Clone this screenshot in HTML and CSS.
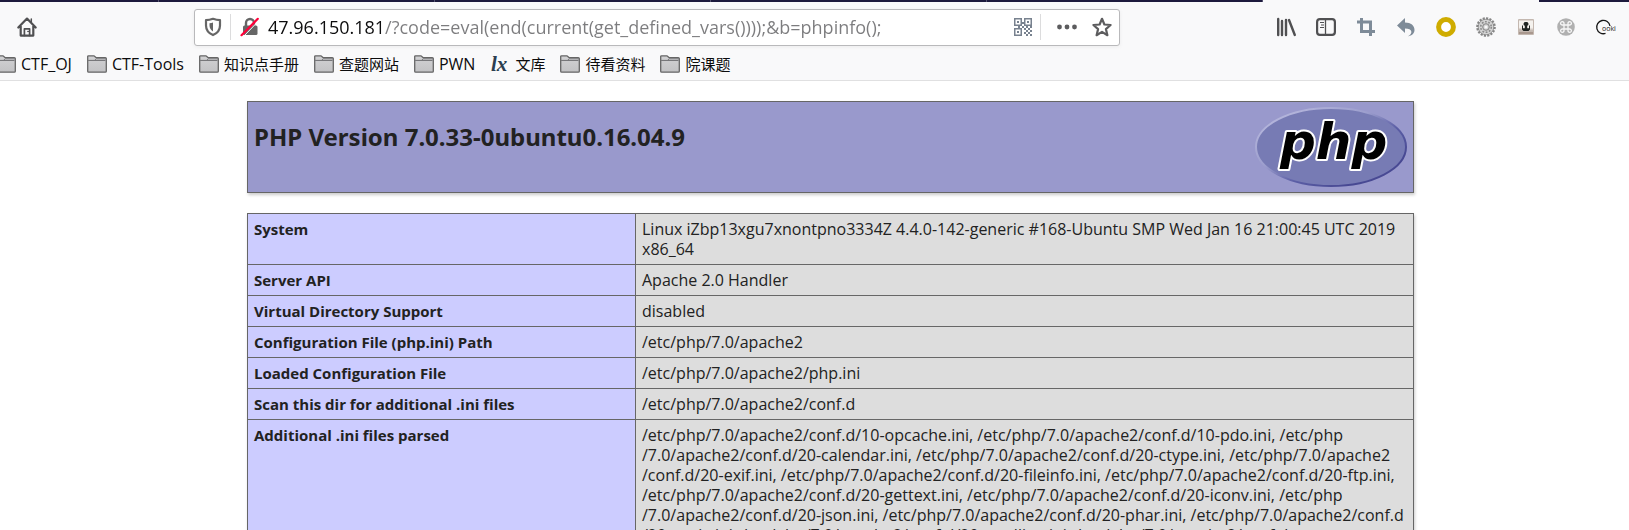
FILE: index.html
```html
<!DOCTYPE html>
<html lang="zh-CN">
<head>
<meta charset="utf-8">
<title>phpinfo()</title>
<link rel="stylesheet" href="styles.css">
</head>
<body>
<svg class="defs" width="0" height="0" aria-hidden="true">
  <defs>
    <linearGradient id="folder-fill" x1="0" y1="0" x2="0" y2="1"><stop offset="0" stop-color="#d2d2d4"/><stop offset="1" stop-color="#c2c2c4"/></linearGradient>
    <symbol id="folder" viewBox="0 0 20 18">
      <path d="M.7 16.2V1.6Q.7.8 1.5.8H7l2 1.8h9.3q1 0 1 1v12.6q0 1-1 1H1.7q-1 0-1-1Z" fill="url(#folder-fill)" stroke="#666" stroke-width="1.3"/>
      <path d="M1 5.400h6.500l1.600-1.600H19" fill="none" stroke="#77777a" stroke-width="1"/>
      <path d="M1.500 5.500H18.500" fill="none" stroke="#77777a" stroke-width="1"/>
    </symbol>
  </defs>
</svg>

<header class="browser">
  <div class="tabstrip"><span class="tab"></span><span class="tab"></span><span class="tab"></span><span class="tab"></span><span class="tab"></span><span class="tab tab-active"></span><span class="tab tab-rest"></span></div>
  <nav class="toolbar" aria-label="Navigation">
    <button class="tool" aria-label="Home"><svg width="20" height="20" viewBox="0 0 20 20" fill="none" stroke="#505052" stroke-width="2.200" stroke-linejoin="round" stroke-linecap="round"><path d="M1.300 10.500 10 1.600l8.700 8.900M3.700 9v9.600h12.600V9"/><path d="M7.400 18.500v-6.700h5.200v6.700" stroke-width="1.700"/><path d="M14.300 2v3" stroke-width="1.500"/><circle cx="11" cy="14.500" r=".4" stroke-width="1"/></svg></button>
    <div class="urlbar">
      <button class="urlbtn shield" aria-label="Tracking protection"><svg width="18" height="20" viewBox="0 0 18 20"><path d="M9 1.800q3.600 1.300 7 1.400v5.300q0 6.500-7 9.600-7-3.100-7-9.600V3.200q3.400-.1 7-1.400Z" fill="none" stroke="#666" stroke-width="2.200" stroke-linejoin="round"/><path d="M9 5.400v9Q5.500 12.200 5.500 8.500V6.200Q7.500 6 9 5.400Z" fill="#666"/></svg></button>
      <button class="urlbtn lock" aria-label="Connection is not secure"><svg width="20" height="20" viewBox="0 0 20 20"><path d="M6 9.500V6a4 4 0 0 1 8 0v3.500" fill="none" stroke="#666" stroke-width="2.400"/><rect x="3" y="8.500" width="14.500" height="9.500" rx="1.500" fill="#666"/><path d="M3 20 18.500 4" stroke="#fff" stroke-width="1"/><path d="M1.500 18.200 17.800 1.800" stroke="#ff0039" stroke-width="2.200" stroke-linecap="round"/></svg></button>
      <input class="address" type="text" aria-label="Address" spellcheck="false" value="47.96.150.181/?code=eval(end(current(get_defined_vars())));&amp;b=phpinfo();">
      <button class="urlbtn qr" aria-label="QR code"><svg width="18" height="18" viewBox="0 0 18 18" fill="#78828f"><path fill-rule="evenodd" d="M0 0h8v8H0Zm1.500 1.500v5h5v-5ZM10 0h8v8h-8Zm1.500 1.500v5h5v-5ZM0 10h8v8H0Zm1.500 1.500v5h5v-5Z"/><path d="M3 3h2v2H3Zm10 0h2v2h-2ZM3 13h2v2H3Zm5-9h2v2H8Zm0 4h2v2H8Zm-4 0h2v2H4Zm8 0h2v2h-2Zm4 0h2v2h-2Zm-6 2h2v2h-2Zm4 0h2v2h-2Zm-2 2h2v2h-2Zm4 0h2v2h-2Zm-6 2h2v2h-2Zm4 0h2v2h-2Zm-2 2h2v2h-2Zm4 0h2v2h-2Z"/></svg></button>
      <button class="urlbtn more" aria-label="Page actions"><svg width="20" height="6" viewBox="0 0 20 6" fill="#5c5c5e"><circle cx="2.500" cy="3" r="2.400"/><circle cx="10" cy="3" r="2.400"/><circle cx="17.500" cy="3" r="2.400"/></svg></button>
      <button class="urlbtn star" aria-label="Bookmark this page"><svg width="20" height="20" viewBox="0 0 20 20"><path d="m10 1.800 2.400 5.700 6.200.5-4.700 4.100 1.500 6.100L10 14.900l-5.400 3.300 1.500-6.100L1.400 8l6.200-.5Z" fill="none" stroke="#5c5c5e" stroke-width="2.200" stroke-linejoin="round"/></svg></button>
    </div>
    <div class="tools">
      <button class="tool" aria-label="Library"><svg width="20" height="20" viewBox="0 0 20 20" stroke="#505052" stroke-width="2.400" stroke-linecap="round"><path d="M2.200 2v16M6 4v14M10 3v15M13 3l5.800 15"/></svg></button>
      <button class="tool" aria-label="Sidebars"><svg width="20" height="20" viewBox="0 0 20 20" fill="none" stroke="#505052"><rect x="1.100" y="2.100" width="17.800" height="15.800" rx="2.800" stroke-width="2.200"/><path d="M9.500 3v14" stroke-width="1.300"/><path d="M4 5.500h4M5 8h3M4 10.500h4" stroke-width="1.100"/></svg></button>
      <button class="tool" aria-label="Screenshot"><svg width="20" height="20" viewBox="0 0 20 20" fill="none" stroke="#7e8b98" stroke-width="3"><path d="M1 5h13.500v14M5.500 1v13.500H19"/></svg></button>
      <button class="tool" aria-label="Undo"><svg width="20" height="20" viewBox="0 0 20 20"><path d="M1 8.500 9 1v4.600c6 0 9.500 3 9.500 7.400 0 3.500-2.600 5.600-6.500 6.300 2.600-1.600 3.600-3 3.300-4.800-.3-2-2.400-3-6.300-3V16Z" fill="#7e8b98"/></svg></button>
      <button class="tool" aria-label="Proxy"><svg width="20" height="20" viewBox="0 0 20 20"><circle cx="10" cy="10" r="7.400" fill="#fff" stroke="#cfac00" stroke-width="5"/></svg></button>
      <button class="tool" aria-label="Settings"><svg width="20" height="20" viewBox="0 0 20 20"><circle cx="10" cy="10" r="8.500" fill="none" stroke="#858585" stroke-width="2.600" stroke-dasharray="2.100 1.220"/><circle cx="10" cy="10" r="7.800" fill="#d4d4d4" stroke="#858585" stroke-width=".8"/><circle cx="10" cy="10" r="5.300" fill="none" stroke="#8c8c8c" stroke-width="1.600" stroke-dasharray="1.800 1.530"/><circle cx="10" cy="10" r="3.300" fill="#d0d0d0" stroke="#858585"/><circle cx="10" cy="10" r="1.600" fill="#f9f9fa"/></svg></button>
      <button class="tool" aria-label="User agent"><svg width="20" height="20" viewBox="0 0 20 20"><rect x="2" y="2" width="16" height="16" rx="1" fill="#c4b8b0"/><path d="M3 3.500h14v7l-1 3-1-3-1 3-2-2H7l-1 2-1-3-1 2-1-2Z" fill="#f5f2ee"/><path d="M3 15h14v2H3Z" fill="#a9988e"/><path d="M10 5a2 2 0 0 1 1.200 3.800v2.400h1.800V8.500h1v4L12.500 14h-5L6 12.500v-4h1v2.700h1.800V8.800A2 2 0 0 1 10 5Z" fill="#202522"/></svg></button>
      <button class="tool" aria-label="Shortcuts"><svg width="20" height="20" viewBox="0 0 20 20"><circle cx="10" cy="10" r="8.800" fill="#b0b0b0"/><path d="M8 8h4v4H8ZM8 8H6.500A1.700 1.700 0 1 1 8 6.500ZM12 8V6.500A1.700 1.700 0 1 1 13.500 8ZM12 12h1.500a1.700 1.700 0 1 1-1.500 1.500ZM8 12v1.500A1.700 1.700 0 1 1 6.500 12Z" fill="none" stroke="#f7f7f7" stroke-width="1.300"/></svg></button>
      <button class="tool" aria-label="Cookie manager"><svg width="20" height="20" viewBox="0 0 20 20"><path d="M9.500 16.400A6.700 6.700 0 1 1 14 9" fill="none" stroke="#161616" stroke-width="1.300"/><text class="ooki" x="6" y="14">ooki</text></svg></button>
    </div>
  </nav>
  <nav class="bookmarks" aria-label="Bookmarks">
    <a class="bookmark latin" href="#"><svg width="20" height="18"><use href="#folder"/></svg>CTF_OJ</a>
    <a class="bookmark latin" href="#"><svg width="20" height="18"><use href="#folder"/></svg>CTF-Tools</a>
    <a class="bookmark" href="#"><svg width="20" height="18"><use href="#folder"/></svg>知识点手册</a>
    <a class="bookmark" href="#"><svg width="20" height="18"><use href="#folder"/></svg>查题网站</a>
    <a class="bookmark latin" href="#"><svg width="20" height="18"><use href="#folder"/></svg>PWN</a>
    <a class="bookmark" href="#"><svg width="20" height="18" viewBox="0 0 20 18"><text class="lx" x="1" y="16">lx</text></svg>文库</a>
    <a class="bookmark" href="#"><svg width="20" height="18"><use href="#folder"/></svg>待看资料</a>
    <a class="bookmark" href="#"><svg width="20" height="18"><use href="#folder"/></svg>院课题</a>
  </nav>
</header>

<main class="page">
  <section class="banner">
    <h1>PHP Version 7.0.33-0ubuntu0.16.04.9</h1>
    <svg class="logo" width="152" height="80" viewBox="0 0 152 80" role="img" aria-label="PHP logo">
      <defs><linearGradient id="rim" x1="0" y1="0" x2="1" y2="1"><stop offset=".15" stop-color="#b2b3da"/><stop offset=".4" stop-color="#9c9ecd"/><stop offset=".6" stop-color="#5b5ea5"/><stop offset=".8" stop-color="#484993"/></linearGradient></defs>
      <ellipse cx="76" cy="40" rx="75" ry="39" fill="#777bb4" stroke="url(#rim)" stroke-width="2"/>
      <text class="php" x="25" y="52">php</text>
    </svg>
  </section>
  <table class="info">
    <tbody>
      <tr><th scope="row">System</th><td>Linux iZbp13xgu7xnontpno3334Z 4.4.0-142-generic #168-Ubuntu SMP Wed Jan 16 21:00:45 UTC 2019<br>x86_64</td></tr>
      <tr><th scope="row">Server API</th><td>Apache 2.0 Handler</td></tr>
      <tr><th scope="row">Virtual Directory Support</th><td>disabled</td></tr>
      <tr><th scope="row">Configuration File (php.ini) Path</th><td>/etc/php/7.0/apache2</td></tr>
      <tr><th scope="row">Loaded Configuration File</th><td>/etc/php/7.0/apache2/php.ini</td></tr>
      <tr><th scope="row">Scan this dir for additional .ini files</th><td>/etc/php/7.0/apache2/conf.d</td></tr>
      <tr><th scope="row">Additional .ini files parsed</th><td>/etc/php/7.0/apache2/conf.d/10-opcache.ini, /etc/php/7.0/apache2/conf.d/10-pdo.ini, /etc/php<br>/7.0/apache2/conf.d/20-calendar.ini, /etc/php/7.0/apache2/conf.d/20-ctype.ini, /etc/php/7.0/apache2<br>/conf.d/20-exif.ini, /etc/php/7.0/apache2/conf.d/20-fileinfo.ini, /etc/php/7.0/apache2/conf.d/20-ftp.ini,<br>/etc/php/7.0/apache2/conf.d/20-gettext.ini, /etc/php/7.0/apache2/conf.d/20-iconv.ini, /etc/php<br>/7.0/apache2/conf.d/20-json.ini, /etc/php/7.0/apache2/conf.d/20-phar.ini, /etc/php/7.0/apache2/conf.d<br>/20-posix.ini, /etc/php/7.0/apache2/conf.d/20-readline.ini, /etc/php/7.0/apache2/conf.d</td></tr>
    </tbody>
  </table>
</main>
</body>
</html>
```

FILE: styles.css
```css
* { box-sizing: border-box; }
html, body { height: 100%; }
body {
  margin: 0;
  overflow: hidden;
  background: #fff;
  color: #222;
  font-family: "Open Sans", "Noto Sans CJK SC", sans-serif;
  font-size: 15px;
}
button { border: 0; padding: 0; background: none; }
svg { display: block; flex: none; overflow: visible; }
.defs { position: absolute; }

.browser { background: #f9f9fa; border-bottom: 1px solid #e0e0e1; }
.tabstrip { display: flex; height: 2px; background: #1d1a3d; }
.tab { flex: 0 1 276px; border-right: 1px solid #55536f; }
.tab:first-child { flex-basis: 159px; }
.tab-active { background: #f9f9fa; border: 0; }
.tab-rest { flex: 1; border: 0; }

.toolbar { display: flex; align-items: center; height: 50px; padding: 0 3px 0 7px; }
.tool { display: flex; flex: none; align-items: center; justify-content: center; width: 40px; height: 36px; }
.tools { display: flex; }
.urlbar {
  display: flex;
  flex: 1;
  align-items: center;
  height: 37px;
  margin: 0 146px 0 147px;
  border: 1px solid #b9b9bb;
  border-radius: 3px;
  background: #fff;
  box-shadow: 0 1px 4px rgba(0, 0, 0, .06);
}
.urlbtn { display: flex; flex: none; align-items: center; justify-content: center; height: 26px; }
.shield { width: 36px; border-right: 1px solid #dcdcdd; }
.lock { width: 37px; }
.address {
  flex: 1;
  min-width: 0;
  height: 32px;
  border: 0;
  padding: 0;
  outline: 0;
  background: linear-gradient(90deg, #0c0c0d 113px, #7c7c7e 113px) text;
  color: transparent;
  font-family: inherit;
  font-size: 18px;
}
.qr { width: 36px; border-right: 1px solid #dcdcdd; }
.more { width: 52px; }
.star { width: 18px; margin-right: 8px; }
.ooki { font: 7px "Open Sans", sans-serif; fill: #161616; }

.bookmarks { display: flex; gap: 15px; height: 28px; margin-left: -4px; align-items: center; padding-bottom: 4px; }
.bookmark { display: flex; flex: none; align-items: center; gap: 5px; color: #0c0c0d; line-height: 20px; text-decoration: none; }
.latin { font-size: 16px; }
.lx { font: italic bold 21px "Liberation Serif", serif; fill: #2c3e50; }

.page { padding: 20px 215px 0 247px; }
.banner {
  display: flex;
  justify-content: space-between;
  align-items: flex-start;
  padding: 5px 6px;
  border: 1px solid #666;
  background: #99c;
  box-shadow: 1px 2px 3px #ccc;
}
h1 { margin: 14px 0 0; font-family: "Noto Sans", sans-serif; font-size: 24px; line-height: 32px; font-weight: 700; white-space: nowrap; }
.php { font: italic bold 50px "DejaVu Sans", sans-serif; fill: #000; stroke: #fff; stroke-width: 4px; stroke-linejoin: round; paint-order: stroke; }

.info { width: 100%; margin-top: 20px; border-collapse: collapse; table-layout: fixed; box-shadow: 1px 2px 3px #ccc; }
.info th, .info td { border: 1px solid #666; padding: 5px 6px; line-height: 20px; text-align: left; vertical-align: top; }
.info th { width: 388px; background: #ccf; font-weight: 700; }
.info td { background: #ddd; font-size: 16px; white-space: nowrap; }
```
